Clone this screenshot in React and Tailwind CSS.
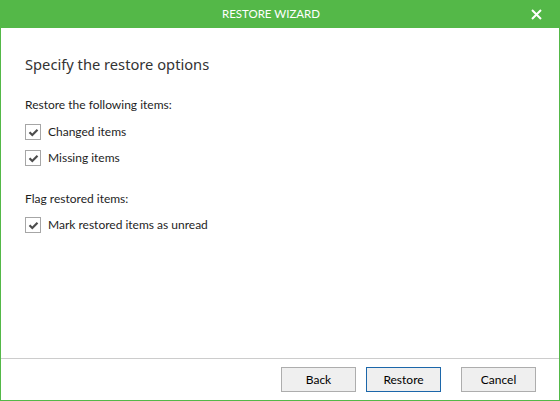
export default function App() {
  const lato = { fontFamily: 'Lato, "Noto Sans", sans-serif' };
  const noto = { fontFamily: '"Noto Sans", "Open Sans", sans-serif' };
  const Check = ({ label, className = "" }) => (
    <div className={`flex items-center h-[26px] ${className}`}>
      <div className="w-[16px] h-[16px] border border-[#a6a6a6] bg-white flex items-center justify-center">
        <svg width="11" height="11" viewBox="0 0 11 11">
          <path d="M1.5 5.2 L4.3 8 L9.5 2.8" fill="none" stroke="#4d4d4d" strokeWidth="2.2" />
        </svg>
      </div>
      <span className="ml-[7px] text-[12px] text-[#1e1e1e] leading-[18px]">{label}</span>
    </div>
  );
  const Btn = ({ children, primary }) => (
    <button
      className={`w-[75px] h-[25px] text-[12px] text-black bg-[#efefef] border ${
        primary ? "border-[#1c67aa]" : "border-[#adadad]"
      } flex items-center justify-center`}
    >
      {children}
    </button>
  );
  return (
    <div className="w-[560px] h-[401px] bg-[#54b848] flex flex-col" style={lato}>
      <div className="h-[28px] flex items-center text-white">
        <div className="flex-1" />
        <div className="text-[11.5px] leading-[28px]">RESTORE WIZARD</div>
        <div className="flex-1 flex justify-end pr-[18px]">
          <svg width="11" height="11" viewBox="0 0 11 11">
            <path d="M1 1 L10 10 M10 1 L1 10" stroke="white" strokeWidth="2" />
          </svg>
        </div>
      </div>
      <div className="flex-1 bg-white mx-px mb-px flex flex-col">
        <div className="flex-1 pl-[24px]">
          <div className="mt-[26px] text-[14.7px] leading-[20px] text-[#333]" style={noto}>Specify the restore options</div>
          <div className="mt-[22px] text-[12px] leading-[18px] text-[#1e1e1e]">Restore the following items:</div>
          <Check label="Changed items" className="mt-[5px]" />
          <Check label="Missing items" />
          <div className="mt-[19px] text-[12px] leading-[18px] text-[#1e1e1e]">Flag restored items:</div>
          <Check label="Mark restored items as unread" className="mt-[4px]" />
        </div>
        <div className="h-[42px] border-t border-[#cccccc] flex justify-end items-start pt-[8px] pr-[23px]">
          <Btn>Back</Btn>
          <div className="w-[10px]" />
          <Btn primary>Restore</Btn>
          <div className="w-[20px]" />
          <Btn>Cancel</Btn>
        </div>
      </div>
    </div>
  );
}
